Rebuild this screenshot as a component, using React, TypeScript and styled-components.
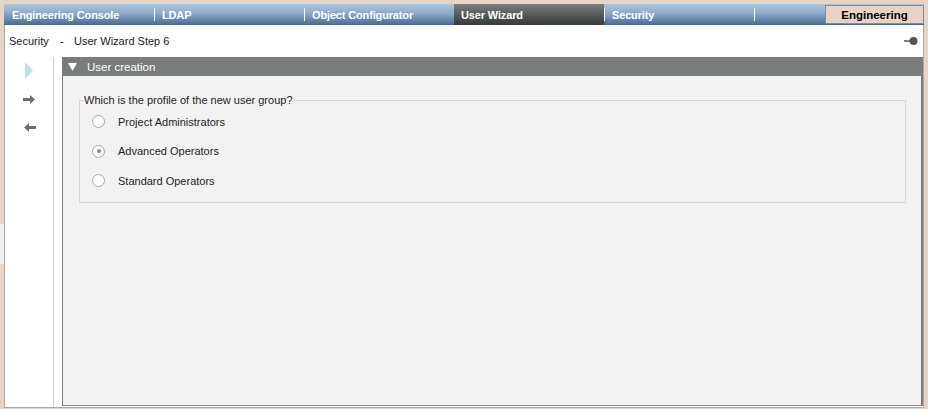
import React from "react";
import styled, { createGlobalStyle } from "styled-components";

const Global = createGlobalStyle`
  html, body { margin: 0; padding: 0; background: #e6d4c6; }
  body { font-family: "Liberation Sans", Arial, sans-serif; font-size: 11px; color: #1e1e1e; }
  #root { width: 928px; height: 409px; overflow: hidden; }
`;

const Page = styled.div`
  position: relative;
  width: 928px;
  height: 409px;
  padding: 4px 4px 0 4px;
  box-sizing: border-box;
`;

const SideStrip = styled.div`
  position: absolute;
  left: 0;
  top: 224px;
  width: 4px;
  height: 40px;
  background: #f2f2f2;
`;

const Frame = styled.div`
  width: 920px;
  height: 404px;
  background: #fff;
  border-left: 1px solid #a8a8a8;
  border-right: 1px solid #a8a8a8;
  border-bottom: 1px solid #a8a8a8;
  box-sizing: border-box;
  display: flex;
  flex-direction: column;
`;

const TabBar = styled.div`
  height: 21px;
  flex: none;
  display: flex;
  align-items: stretch;
  background: linear-gradient(#b1c5da 0%, #8ea9c6 45%, #6786ab 75%, #4b6a90 100%);
  margin-left: -1px;
  margin-right: -1px;
`;

const Tab = styled.div<{ $active?: boolean; $sep?: boolean }>`
  position: relative;
  width: 150px;
  flex: none;
  box-sizing: border-box;
  padding-left: ${(p) => (p.$active ? "7px" : "8px")};
  display: flex;
  align-items: center;
  color: #fff;
  font-weight: bold;
  font-size: 11px;
  letter-spacing: -0.15px;
  background: ${(p) =>
    p.$active ? "linear-gradient(#7a7f7d 0%, #575c5a 50%, #363b39 100%)" : "transparent"};
  &::before {
    content: "";
    display: ${(p) => (p.$sep ? "block" : "none")};
    position: absolute;
    left: 0;
    top: 4px;
    bottom: 4px;
    width: 1px;
    background: #f4f7fa;
  }
`;

const Spacer = styled.div`
  flex: 1;
  position: relative;
  &::before {
    content: "";
    position: absolute;
    left: 0;
    top: 4px;
    bottom: 4px;
    width: 1px;
    background: #f4f7fa;
  }
`;

const ModeBox = styled.div`
  width: 99px;
  flex: none;
  margin: 1px 0 1px 0;
  box-sizing: border-box;
  background: #e6d3c5;
  border: 1px solid #7e8e9e;
  display: flex;
  align-items: center;
  justify-content: center;
  color: #000;
  font-weight: bold;
  font-size: 11.5px;
`;

const Breadcrumb = styled.div`
  height: 32px;
  flex: none;
  display: flex;
  align-items: center;
  padding: 0 5px 0 4px;
  font-size: 11px;
  color: #1a1a1a;
`;

const Crumb = styled.span<{ $w?: number }>`
  display: inline-block;
  width: ${(p) => (p.$w ? `${p.$w}px` : "auto")};
`;

const Pin = styled.svg`
  margin-left: auto;
`;

const Body = styled.div`
  flex: 1;
  display: flex;
  min-height: 0;
`;

const Sidebar = styled.div`
  width: 48px;
  flex: none;
  border-right: 1px solid #d3d3d3;
  display: flex;
  flex-direction: column;
  align-items: center;
  padding-top: 4px;
`;

const SideIcon = styled.div<{ $h: number; $mt?: number }>`
  height: ${(p) => p.$h}px;
  margin-top: ${(p) => p.$mt ?? 0}px;
  display: flex;
  align-items: center;
  justify-content: center;
`;

const Gap = styled.div`
  width: 8px;
  flex: none;
`;

const Panel = styled.div`
  flex: 1;
  display: flex;
  flex-direction: column;
  border-left: 1px solid #7d7d7d;
  border-right: 2px solid #7d7d7d;
  border-bottom: 1px solid #8a8a8a;
  margin-bottom: 1px;
  background: #f2f2f2;
`;

const PanelHeader = styled.div`
  height: 19px;
  flex: none;
  background: #797c7d;
  color: #fff;
  display: flex;
  align-items: center;
  padding-left: 5px;
  gap: 10px;
  font-size: 11.5px;
`;

const PanelContent = styled.div`
  flex: 1;
  padding: 17px 15px 0 16px;
`;

const GroupBox = styled.fieldset`
  margin: 0;
  padding: 0 0 6px 12px;
  border: 1px solid #d6d6d6;
  display: flex;
  flex-direction: column;
`;

const Legend = styled.legend`
  padding: 0;
  margin-left: -8px;
  font-size: 11px;
  color: #1e1e1e;
  line-height: 14px;
`;

const RadioRow = styled.label`
  height: 29.5px;
  display: flex;
  align-items: center;
  gap: 13px;
  font-size: 11px;
  color: #1e1e1e;
`;

const RadioCircle = styled.span<{ $checked?: boolean }>`
  width: 11px;
  height: 11px;
  border-radius: 50%;
  border: 1px solid #a8a8a8;
  background: #fff;
  display: flex;
  align-items: center;
  justify-content: center;
  &::after {
    content: "";
    display: ${(p) => (p.$checked ? "block" : "none")};
    width: 4px;
    height: 4px;
    border-radius: 50%;
    background: #8a8a8a;
  }
`;

const tabs = ["Engineering Console", "LDAP", "Object Configurator", "User Wizard", "Security"];
const options = [
  { label: "Project Administrators", checked: false },
  { label: "Advanced Operators", checked: true },
  { label: "Standard Operators", checked: false },
];

export default function App() {
  return (
    <>
      <Global />
      <Page>
        <SideStrip />
        <Frame>
          <TabBar>
            {tabs.map((t, i) => (
              <Tab key={t} $active={t === "User Wizard"} $sep={i > 0 && t !== "User Wizard"}>
                {t}
              </Tab>
            ))}
            <Spacer />
            <ModeBox>Engineering</ModeBox>
          </TabBar>
          <Breadcrumb>
            <Crumb $w={51}>Security</Crumb>
            <Crumb $w={14}>-</Crumb>
            <Crumb>User Wizard Step 6</Crumb>
            <Pin width="14" height="10" viewBox="0 0 14 10">
              <line x1="0" y1="5" x2="6" y2="5" stroke="#555" strokeWidth="1.5" />
              <circle cx="9.5" cy="5" r="4" fill="#555" />
            </Pin>
          </Breadcrumb>
          <Body>
            <Sidebar>
              <SideIcon $h={18}>
                <svg width="10" height="17" viewBox="0 0 10 17">
                  <polygon points="1,0 9,8.5 1,17" fill="#bfe0e8" />
                </svg>
              </SideIcon>
              <SideIcon $h={28} $mt={6}>
                <svg width="13" height="9" viewBox="0 0 13 9">
                  <rect x="0" y="3" width="8" height="3" fill="#6f6f6f" />
                  <polygon points="7,0 12,4.5 7,9" fill="#6f6f6f" />
                </svg>
              </SideIcon>
              <SideIcon $h={28}>
                <svg width="13" height="9" viewBox="0 0 13 9">
                  <rect x="5" y="3" width="8" height="3" fill="#6f6f6f" />
                  <polygon points="6,0 1,4.5 6,9" fill="#6f6f6f" />
                </svg>
              </SideIcon>
            </Sidebar>
            <Gap />
            <Panel>
              <PanelHeader>
                <svg width="9" height="8" viewBox="0 0 9 8">
                  <polygon points="0,0 9,0 4.5,8" fill="#fff" />
                </svg>
                <span>User creation</span>
              </PanelHeader>
              <PanelContent>
                <GroupBox>
                  <Legend>Which is the profile of the new user group?</Legend>
                  {options.map((o) => (
                    <RadioRow key={o.label}>
                      <RadioCircle $checked={o.checked} />
                      {o.label}
                    </RadioRow>
                  ))}
                </GroupBox>
              </PanelContent>
            </Panel>
          </Body>
        </Frame>
      </Page>
    </>
  );
}
